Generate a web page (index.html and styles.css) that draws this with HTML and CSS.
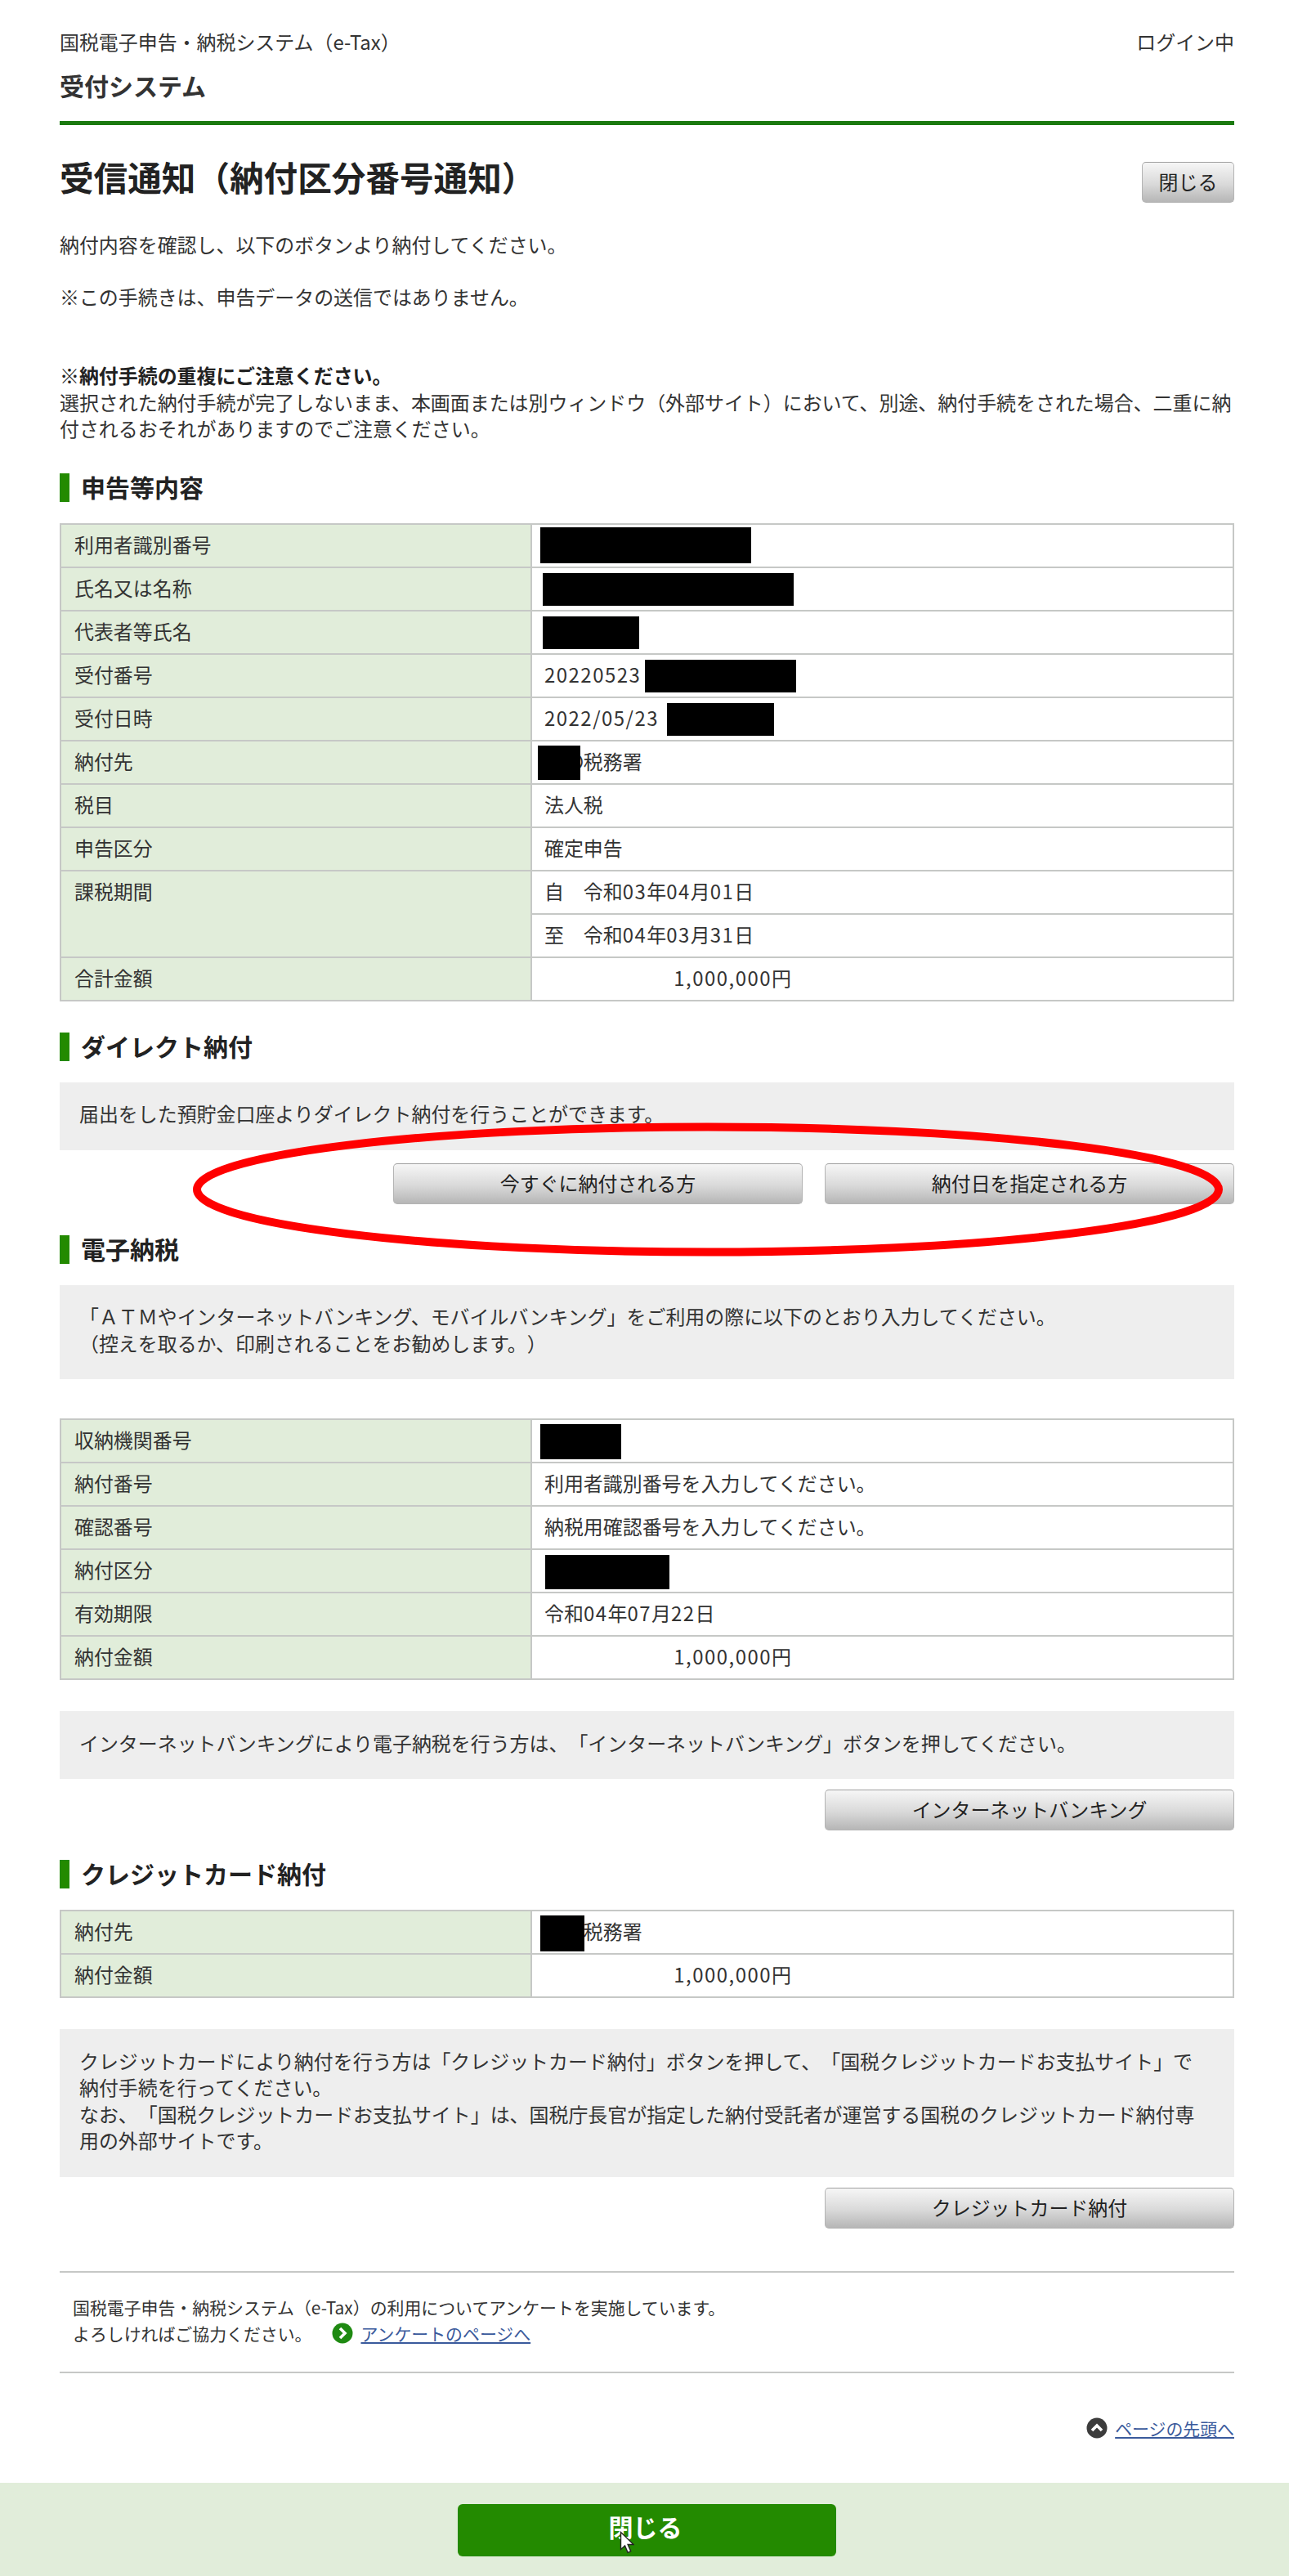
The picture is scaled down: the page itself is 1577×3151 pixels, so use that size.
FILE: index.html
```html
<!DOCTYPE html>
<html lang="ja">
<head>
    <meta charset="utf-8">
    <title>受信通知（納付区分番号通知）</title>
    <link rel="stylesheet" href="styles.css">
</head>
<body>
    <div class="page">
        <!-- ヘッダー -->
        <header class="site-header">
            <div class="site-top">
                <span>国税電子申告・納税システム（e-Tax）</span>
                <span>ログイン中</span>
            </div>
            <div class="site-name">受付システム</div>
        </header>

        <div class="title-row">
            <h1>受信通知（納付区分番号通知）</h1>
            <a class="btn btn-small" href="#">閉じる</a>
        </div>

        <p class="lead">納付内容を確認し、以下のボタンより納付してください。</p>
        <p class="lead-note">※この手続きは、申告データの送信ではありません。</p>
        <p class="warning">
            <strong>※納付手続の重複にご注意ください。</strong><br>
            選択された納付手続が完了しないまま、本画面または別ウィンドウ（外部サイト）において、別途、納付手続をされた場合、二重に納付されるおそれがありますのでご注意ください。
        </p>

        <!-- 申告等内容 -->
        <h2 class="section-title section-first">申告等内容</h2>
        <table class="info-table">
            <tr><th>利用者識別番号</th><td><span class="redact r-user"></span></td></tr>
            <tr><th>氏名又は名称</th><td><span class="redact r-name"></span></td></tr>
            <tr><th>代表者等氏名</th><td><span class="redact r-rep"></span></td></tr>
            <tr><th>受付番号</th><td><span class="num">20220523</span><span class="redact r-recv"></span></td></tr>
            <tr><th>受付日時</th><td><span class="num">2022/05/23</span><span class="redact r-time"></span></td></tr>
            <tr><th>納付先</th><td>〇〇税務署<span class="redact r-office"></span></td></tr>
            <tr><th>税目</th><td>法人税</td></tr>
            <tr><th>申告区分</th><td>確定申告</td></tr>
            <tr><th rowspan="2" class="top">課税期間</th><td>自　令和<span class="num">03</span>年<span class="num">04</span>月<span class="num">01</span>日</td></tr>
            <tr><td>至　令和<span class="num">04</span>年<span class="num">03</span>月<span class="num">31</span>日</td></tr>
            <tr><th>合計金額</th><td><span class="amount"><span class="num">1,000,000</span>円</span></td></tr>
        </table>

        <!-- ダイレクト納付 -->
        <h2 class="section-title">ダイレクト納付</h2>
        <div class="notice">届出をした預貯金口座よりダイレクト納付を行うことができます。</div>
        <div class="btn-row btn-row-direct">
            <a class="btn" href="#">今すぐに納付される方</a>
            <a class="btn" href="#">納付日を指定される方</a>
        </div>

        <!-- 電子納税 -->
        <h2 class="section-title">電子納税</h2>
        <div class="notice">「ＡＴＭやインターネットバンキング、モバイルバンキング」をご利用の際に以下のとおり入力してください。<br>（控えを取るか、印刷されることをお勧めします。）</div>
        <table class="info-table table-pay">
            <tr><th>収納機関番号</th><td><span class="redact r-org"></span></td></tr>
            <tr><th>納付番号</th><td>利用者識別番号を入力してください。</td></tr>
            <tr><th>確認番号</th><td>納税用確認番号を入力してください。</td></tr>
            <tr><th>納付区分</th><td><span class="redact r-kubun"></span></td></tr>
            <tr><th>有効期限</th><td>令和<span class="num">04</span>年<span class="num">07</span>月<span class="num">22</span>日</td></tr>
            <tr><th>納付金額</th><td><span class="amount"><span class="num">1,000,000</span>円</span></td></tr>
        </table>
        <div class="notice notice-after-table">インターネットバンキングにより電子納税を行う方は、「インターネットバンキング」ボタンを押してください。</div>
        <div class="btn-row">
            <a class="btn" href="#">インターネットバンキング</a>
        </div>

        <!-- クレジットカード納付 -->
        <h2 class="section-title section-credit">クレジットカード納付</h2>
        <table class="info-table">
            <tr><th>納付先</th><td>〇〇税務署<span class="redact r-office2"></span></td></tr>
            <tr><th>納付金額</th><td><span class="amount"><span class="num">1,000,000</span>円</span></td></tr>
        </table>
        <div class="notice notice-after-table">クレジットカードにより納付を行う方は「クレジットカード納付」ボタンを押して、「国税クレジットカードお支払サイト」で納付手続を行ってください。<br>なお、「国税クレジットカードお支払サイト」は、国税庁長官が指定した納付受託者が運営する国税のクレジットカード納付専用の外部サイトです。</div>
        <div class="btn-row">
            <a class="btn" href="#">クレジットカード納付</a>
        </div>

        <!-- アンケート -->
        <div class="survey">
            国税電子申告・納税システム（e-Tax）の利用についてアンケートを実施しています。<br>
            <span class="survey-line">よろしければご協力ください。
                <a class="icon-link" href="#">
                    <svg class="round-icon" viewBox="0 0 26 26"><circle cx="13" cy="13" r="12.5" fill="#1f8a12"/><path d="M10 7l6 6-6 6" fill="none" stroke="#fff" stroke-width="3.6"/></svg>
                    <span>アンケートのページへ</span>
                </a>
            </span>
        </div>

        <div class="page-top">
            <a class="icon-link" href="#">
                <svg class="round-icon" viewBox="0 0 26 26"><circle cx="13" cy="13" r="12.5" fill="#3c3c3c"/><path d="M7 16l6-6 6 6" fill="none" stroke="#fff" stroke-width="3.6"/></svg>
                <span>ページの先頭へ</span>
            </a>
        </div>

        <!-- 赤い丸印 -->
        <svg class="red-mark" viewBox="0 0 1270 170"><ellipse cx="635" cy="85" rx="625" ry="76.5" fill="none" stroke="#f00" stroke-width="10"/></svg>
    </div>

    <footer class="page-footer">
        <a class="btn-close" href="#">閉じる
            <svg class="cursor" viewBox="0 0 18 28"><path d="M1.5 1.5v21l5-4.6 3.6 8.4 3.6-1.6-3.6-8.2h7z" fill="#fff" stroke="#222" stroke-width="1.4"/></svg>
        </a>
    </footer>
</body>
</html>
```

FILE: styles.css
```css
/* 全体 */
:root {
    --verde: #238a00;
    --verde-claro: #e1edda;
    --gris-borde: #c6c8c6;
    --gris-fondo: #eeeeee;
    --texto: #333333;
}

* {
    margin: 0;
    padding: 0;
    box-sizing: border-box;
}

body {
    background: #ffffff;
    color: var(--texto);
    font-family: "Noto Sans CJK JP", "Noto Sans", sans-serif;
    font-size: 23.95px;
    line-height: 32.5px;
    text-spacing-trim: space-all;
}

a {
    text-decoration: none;
    color: inherit;
}

.page {
    position: relative;
    padding: 35px 67px 0 73px;
}

/* ヘッダー */
.site-header {
    padding-bottom: 24.5px;
    border-bottom: 5px solid #1b7a10;
}

.site-top {
    display: flex;
    justify-content: space-between;
}

.site-name {
    margin-top: 16px;
    font-size: 30px;
    line-height: 40px;
    font-weight: 700;
}

.title-row {
    display: flex;
    justify-content: space-between;
    align-items: flex-start;
    margin-top: 45px;
}

h1 {
    font-size: 41.6px;
    line-height: 36px;
    font-weight: 700;
    color: #222222;
}

.lead {
    margin-top: 35px;
}

.lead-note {
    margin-top: 31px;
}

.warning {
    margin-top: 64px;
}

.warning strong {
    color: #222222;
}

/* 見出し */
.section-title {
    margin-top: 38px;
    margin-bottom: 26px;
    padding-left: 14px;
    padding-bottom: 2px;
    border-left: 12px solid var(--verde);
    font-size: 30px;
    line-height: 33px;
    font-weight: 700;
    color: #222222;
}

.section-credit {
    margin-top: 36px;
}

/* テーブル */
.info-table {
    width: 100%;
    border-collapse: collapse;
    table-layout: fixed;
}

.info-table th,
.info-table td {
    height: 53px;
    padding: 0 15px 2px;
    border: 2px solid var(--gris-borde);
    font-weight: 400;
    text-align: left;
    vertical-align: middle;
}

.info-table th {
    width: 576px;
    padding-left: 16px;
    background: var(--verde-claro);
}

.info-table th.top {
    vertical-align: top;
    padding-top: 8px;
}

.info-table td {
    position: relative;
}

.table-pay {
    margin-top: 48px;
}

.num {
    letter-spacing: 1.5px;
}

.amount {
    display: block;
    width: 302px;
    text-align: right;
}

/* 黒塗り */
.redact {
    position: absolute;
    background: #000000;
}

.r-user { left: 10px; top: 3px; width: 258px; height: 44px; }
.r-name { left: 13px; top: 6px; width: 307px; height: 40px; }
.r-rep { left: 13px; top: 6px; width: 118px; height: 40px; }
.r-recv { left: 138px; top: 6px; width: 185px; height: 40px; }
.r-time { left: 165px; top: 6px; width: 131px; height: 40px; }
.r-office { left: 7px; top: 5px; width: 52px; height: 42px; }
.r-org { left: 10px; top: 5px; width: 99px; height: 43px; }
.r-kubun { left: 16px; top: 6px; width: 152px; height: 42px; }
.r-office2 { left: 10px; top: 5px; width: 54px; height: 44px; }

/* お知らせ */
.notice {
    padding: 22.5px 40px 28px 24px;
    background: var(--gris-fondo);
}

.notice-after-table {
    margin-top: 38px;
}

/* ボタン */
.btn {
    display: block;
    height: 50px;
    border: 1px solid #b4b4b4;
    border-top-color: #a0a0a0;
    border-radius: 5px;
    background: linear-gradient(to bottom, #f6f6f6 0%, #d9d9d9 55%, #b6b6b6 100%);
    color: #222222;
    line-height: 46px;
    text-align: center;
}

.btn-small {
    width: 113px;
}

.btn-row {
    display: flex;
    justify-content: flex-end;
    gap: 27px;
    margin-top: 13px;
}

.btn-row .btn {
    width: 501px;
}

.btn-row-direct {
    margin-top: 16px;
}

/* アンケート */
.survey {
    margin-top: 52px;
    padding: 26px 16px 31px;
    border-top: 2px solid var(--gris-borde);
    border-bottom: 2px solid var(--gris-borde);
    font-size: 20.9px;
    line-height: 32px;
}

.survey-line {
    display: flex;
    align-items: center;
    gap: 25px;
}

.icon-link {
    display: inline-flex;
    align-items: center;
    gap: 9px;
    font-size: 20.9px;
    line-height: 32px;
    color: #3a5a9c;
}

.icon-link span {
    text-decoration: underline;
}

.round-icon {
    width: 26px;
    height: 26px;
}

.page-top {
    display: flex;
    justify-content: flex-end;
    margin-top: 51px;
}

/* 赤い丸印 */
.red-mark {
    position: absolute;
    left: 231px;
    top: 1370px;
    width: 1270px;
    height: 170px;
}

/* フッター */
.page-footer {
    display: flex;
    justify-content: center;
    margin-top: 51px;
    padding: 26px 0 27px 6px;
    background: var(--verde-claro);
}

.btn-close {
    position: relative;
    display: block;
    width: 463px;
    height: 64px;
    padding-right: 4px;
    border-radius: 6px;
    background: var(--verde);
    color: #ffffff;
    font-size: 30px;
    font-weight: 700;
    line-height: 55px;
    text-align: center;
}

.cursor {
    position: absolute;
    left: 198px;
    top: 33px;
    width: 18px;
    height: 28px;
}
```
